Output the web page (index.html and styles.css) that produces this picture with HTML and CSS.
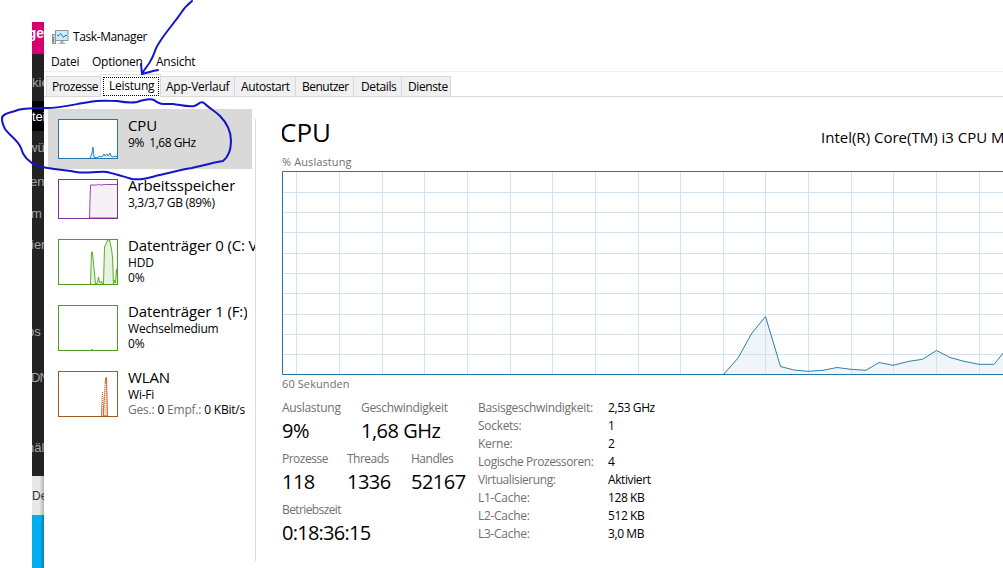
FILE: index.html
```
<!DOCTYPE html>
<html lang="de">
<head>
  <meta charset="UTF-8" />
  <meta name="viewport" content="width=device-width, initial-scale=1.0" />
  <title>Task-Manager</title>
  <link rel="stylesheet" href="styles.css">
</head>
<body>
  <!-- Page behind the window -->
  <div class="behind">
    <div class="b-pink">ge</div>
    <div class="b-kie">kie</div>
    <div class="b-black">tei</div>
    <div class="b-wu">wü</div>
    <div class="b-en">en</div>
    <div class="b-m">m</div>
    <div class="b-ier">ier</div>
    <div class="b-ps">ps</div>
    <div class="b-dn">DN</div>
    <div class="b-hal">häl</div>
    <div class="b-p">P</div>
    <div class="b-status">De</div>
    <div class="b-desktop"></div>
  </div>

  <div class="window">
    <div class="titlebar">
      <svg class="app-icon" width="17" height="16" viewBox="0 0 17 16">
        <rect x="0.5" y="4.5" width="3" height="9" fill="#c9d3ca" stroke="#87958d"/>
        <path d="M1.500 7v5" stroke="#6f9b62"/>
        <rect x="3.500" y="0.5" width="12.500" height="10" fill="#c9ecfa" stroke="#8b99a2"/>
        <path d="M5 5.500h2l1.500-2 3 4 1.500-2H15" fill="none" stroke="#277fa9"/>
        <path d="M8.500 11h3v2h2v1h-7v-1h2z" fill="#a5b0b7"/>
      </svg>
      <span>Task-Manager</span>
    </div>
    <div class="menu">
      <span class="m1">Datei</span>
      <span class="m2">Optionen</span>
      <span>Ansicht</span>
    </div>
    <div class="tabs">
      <div class="tab tab1">Prozesse</div>
      <div class="tab active"><span>Leistung</span></div>
      <div class="tab tab3">App-Verlauf</div>
      <div class="tab tab4">Autostart</div>
      <div class="tab tab5">Benutzer</div>
      <div class="tab tab6">Details</div>
      <div class="tab tab7">Dienste</div>
    </div>

    <div class="content">
      <div class="sidebar">
        <div class="item selected">
          <svg class="thumb" width="60" height="40" viewBox="0 0 60 40">
            <rect x="0.5" y="0.5" width="59" height="39" fill="#fff" stroke="#2178b4"/>
            <path d="M32 39l2-5 1-6 1 10 3 1 2-2 2 1 2-1 1-2 1 2 2-2 1 2 2-3 1 3 2 1 3-1 1 1" fill="#dcebf5" stroke="#2f86bb"/>
          </svg>
          <div class="info">
            <div class="name">CPU</div>
            <div class="sub s-cpu">9%&nbsp; 1,68 GHz</div>
          </div>
        </div>
        <div class="item">
          <svg class="thumb" width="60" height="40" viewBox="0 0 60 40">
            <path d="M31.500 39l1-33h7l1-1 2 1 5-.5h12V39z" fill="#f4f2f4" stroke="#9447ad"/>
            <rect x="0.5" y="0.5" width="59" height="39" fill="none" stroke="#7d2fa0"/>
          </svg>
          <div class="info">
            <div class="name">Arbeitsspeicher</div>
            <div class="sub s-ram">3,3/3,7 GB (89%)</div>
          </div>
        </div>
        <div class="item">
          <svg class="thumb" width="60" height="46" viewBox="0 0 60 46">
            <path d="M32.500 45l1-32h1l2 22 1 10 2-1 1-6 1 5 1 1 1-2 1 3h1l1-37 2-4 1-3h2l2 9 1 8 1 27 1-4 1 3 1-14 2 15" fill="#e6f3de" stroke="#5cab2d"/>
            <rect x="0.5" y="0.5" width="59" height="45" fill="none" stroke="#4e9e1f"/>
          </svg>
          <div class="info">
            <div class="name">Datenträger 0 (C: V</div>
            <div class="sub">HDD</div>
            <div class="sub third">0%</div>
          </div>
        </div>
        <div class="item">
          <svg class="thumb" width="60" height="46" viewBox="0 0 60 46">
            <rect x="0.5" y="0.5" width="59" height="45" fill="#fff" stroke="#4e9e1f"/>
            <path d="M33 44.500h2" stroke="#7fb95d"/>
          </svg>
          <div class="info">
            <div class="name">Datenträger 1 (F:)</div>
            <div class="sub">Wechselmedium</div>
            <div class="sub third">0%</div>
          </div>
        </div>
        <div class="item">
          <svg class="thumb" width="60" height="46" viewBox="0 0 60 46">
            <path d="M43.500 45l1-25 1 25 2-37 1-2 1 39z" fill="#f3d3bb" stroke="#c86b36"/>
            <path d="M44.500 45V20M46.500 44l1-32" stroke="#fff" stroke-dasharray="1 1"/>
            <rect x="0.5" y="0.5" width="59" height="45" fill="none" stroke="#a4571b"/>
          </svg>
          <div class="info">
            <div class="name">WLAN</div>
            <div class="sub">Wi-Fi</div>
            <div class="sub third"><i>Ges.:</i> 0 <i>Empf.:</i> 0 KBit/s</div>
          </div>
        </div>
      </div>

      <div class="main">
        <div class="head">
          <h1>CPU</h1>
          <div class="model">Intel(R) Core(TM) i3 CPU M</div>
        </div>
        <div class="caption c-top">% Auslastung</div>
        <svg class="chart" width="721" height="204" viewBox="282 171 721 204">
          <path class="area" d="M724 374L738 358 752 333 765.500 316.500 780.500 366.500 794 370 808 371.300 823 370.300 837 367.500 851 369.300 866 370.300 879 362.500 893 365.300 909 361.300 922.500 359.300 936.500 350.500 950 357.500 964 361.300 979 364.300 994 364.300 1004 352V374z"/>
          <path class="grid" d="M296.500 172v202M339.500 172v202M382.500 172v202M424.500 172v202M467.500 172v202M510.500 172v202M552.500 172v202M595.500 172v202M638.500 172v202M680.500 172v202M723.500 172v202M765.500 172v202M808.500 172v202M851.500 172v202M893.500 172v202M936.500 172v202M979.500 172v202M283 192.500h720M283 212.500h720M283 232.500h720M283 253.500h720M283 273.500h720M283 293.500h720M283 314.500h720M283 334.500h720M283 354.500h720"/>
          <path class="line" d="M724 374L738 358 752 333 765.500 316.500 780.500 366.500 794 370 808 371.300 823 370.300 837 367.500 851 369.300 866 370.300 879 362.500 893 365.300 909 361.300 922.500 359.300 936.500 350.500 950 357.500 964 361.300 979 364.300 994 364.300 1004 352"/>
          <path class="frame" d="M1003 171.500H282.500v203H1003"/>
        </svg>
        <div class="caption c-sec">60 Sekunden</div>

        <div class="stats">
          <div class="left">
            <div class="row">
              <div class="stat w79"><label>Auslastung</label><b>9%</b></div>
              <div class="stat"><label>Geschwindigkeit</label><b>1,68 GHz</b></div>
            </div>
            <div class="row">
              <div class="stat w65"><label class="tight">Prozesse</label><b>118</b></div>
              <div class="stat w64"><label class="tight">Threads</label><b>1336</b></div>
              <div class="stat"><label class="tight">Handles</label><b>52167</b></div>
            </div>
            <div class="row">
              <div class="stat uptime"><label>Betriebszeit</label><b>0:18:36:15</b></div>
            </div>
          </div>
          <div class="details">
            <span>Basisgeschwindigkeit:</span><em>2,53 GHz</em>
            <span>Sockets:</span><em>1</em>
            <span>Kerne:</span><em>2</em>
            <span class="tight">Logische Prozessoren:</span><em>4</em>
            <span class="tight">Virtualisierung:</span><em>Aktiviert</em>
            <span>L1-Cache:</span><em>128 KB</em>
            <span>L2-Cache:</span><em>512 KB</em>
            <span>L3-Cache:</span><em>3,0 MB</em>
          </div>
        </div>
      </div>
    </div>
  </div>

  <!-- Pen marks -->
  <svg class="pen" width="1003" height="568" viewBox="0 0 1003 568">
    <path d="M192 1C187 5 184 8 181 13C175 22 165 33 159 43C154 50 155 54 151 60C149 65 144 69 142 74M141 64L142 74C147 73 152 71 158 70"/>
    <path d="M2 119C1 114 9 113 15 111C24 107 35 109 46 108C63 108 75 104 89 102C100 100 108 101 117 101C128 103 132 103 137 102C143 100 149 98 154 100C159 105 165 104 173 104C181 105 187 107 194 106C199 105 200 100 204 103C209 108 215 111 220 116C226 122 231 130 231 141C231 151 228 157 223 161C211 163 201 166 192 168C182 169 174 172 164 174C153 176 143 181 132 179C122 176 115 174 107 172C96 171 86 174 76 172C64 170 49 169 38 166C28 162 23 157 21 148C18 140 9 135 5 129C3 125 2 123 2 119Z"/>
  </svg>
</body>
</html>
```

FILE: styles.css
```
* {
  box-sizing: border-box;
}
body {
  margin: 0;
  width: 1003px;
  height: 568px;
  padding: 22px 0 0 32px;
  display: flex;
  overflow: hidden;
  background: #fff;
  color: #000;
  font-family: "Open Sans", "Noto Sans", sans-serif;
  font-size: 12px;
  position: relative;
}

/* strip of the page behind */
.behind {
  width: 12px;
  flex: none;
  overflow: hidden;
  font-family: "Liberation Sans", Arial, sans-serif;
  font-size: 13px;
  line-height: 16px;
  color: #a5a5a5;
  background: #232323;
  white-space: nowrap;
}
.behind div {
  overflow: hidden;
  display: flex;
}
.b-pink {
  height: 32px;
  padding-top: 3px;
  background: #d6006e;
  color: #fff;
  font-size: 14px;
  font-weight: bold;
  justify-content: flex-end;
}
.b-kie { height: 47px; padding-top: 21px; }
.b-black {
  height: 30px;
  padding-top: 8px;
  background: #000;
  color: #fff;
}
.b-wu { height: 37px; padding-top: 9px; margin-left: -4px; }
.b-en { height: 32px; padding-top: 6px; margin-left: -2px; }
.b-m { height: 32px; padding-top: 6px; margin-left: -1px; }
.b-ier { height: 85px; padding-top: 5px; margin-left: -1px; }
.b-ps { height: 42px; padding-top: 7px; margin-left: -5px; }
.b-dn { height: 72px; padding-top: 11px; margin-left: -1px; letter-spacing: -1px; }
.b-hal { height: 30px; padding-top: 9px; margin-left: -5px; }
.b-p { height: 15px; padding-top: 12px; }
.b-status {
  height: 39px;
  padding-top: 12px;
  background: linear-gradient(90deg, #e8e8e8 60%, #b5b5b5);
  color: #333;
  font-size: 12px;
}
.b-desktop {
  height: 53px;
  background: linear-gradient(90deg, #00adef 70%, #087daa);
}

.window {
  flex: 1;
  min-width: 0;
  background: #fff;
}
.titlebar {
  height: 29px;
  display: flex;
  padding-left: 8px;
  white-space: nowrap;
  line-height: 30px;
  letter-spacing: -0.4px;
}
.app-icon {
  margin: 8px 4px 0 0;
}
.menu {
  height: 21px;
  display: flex;
  border-bottom: 1px solid #f0f0f0;
  line-height: 22px;
  padding-left: 7px;
  letter-spacing: -0.25px;
}
.m1 { width: 41px; }
.m2 { width: 64px; }
.tabs {
  height: 25px;
  display: flex;
  align-items: flex-end;
  border-bottom: 1px solid #d9d9d9;
  padding-left: 2px;
  letter-spacing: -0.25px;
}
.tab {
  height: 20px;
  border: 1px solid #d9d9d9;
  border-width: 1px 1px 0 0;
  background: #f0f0f0;
  line-height: 20px;
  white-space: nowrap;
  padding-left: 5px;
}
.tab1 {
  width: 55px;
  border-left-width: 1px;
  letter-spacing: -0.5px;
}
.tab3 { width: 74px; }
.tab4 { width: 61px; padding-left: 6px; letter-spacing: -0.4px; }
.tab5 { width: 58px; padding-left: 6px; letter-spacing: -0.5px; }
.tab6 { width: 48px; padding-left: 7px; letter-spacing: -0.4px; }
.tab7 { width: 49px; padding-left: 6px; letter-spacing: -0.4px; }
.tab.active {
  width: 60px;
  height: 23px;
  background: #fff;
  padding: 2px 1px 0 2px;
  margin-bottom: -1px;
}
.active span {
  display: block;
  height: 19px;
  line-height: 16px;
  border: 1px dotted #000;
  padding-left: 5px;
}

.content {
  display: flex;
}
.sidebar {
  width: 212px;
  height: 464px;
  flex: none;
  padding: 12px 0 0 4px;
  background: linear-gradient(#dcdcdc, #dcdcdc) no-repeat 211px 22px / 1px 442px;
  overflow: hidden;
}
.item {
  width: 207px;
  height: 66px;
  display: flex;
  padding: 10px 0 0 10px;
}
.item:nth-child(1), .item:nth-child(2) {
  height: 60px;
}
.selected {
  width: 204px;
  background: #d9d9d9;
}
.thumb {
  flex: none;
  background: #fff;
}
.info {
  margin-top: -2px;
  padding-left: 10px;
  white-space: nowrap;
  overflow: hidden;
}
.name {
  font-size: 15px;
  line-height: 17px;
  height: 18px;
  letter-spacing: -0.12px;
}
.sub {
  height: 16px;
  line-height: 16px;
  letter-spacing: -0.2px;
}
.s-cpu { letter-spacing: -0.45px; }
.s-ram { letter-spacing: -0.3px; }
.third {
  line-height: 14px;
}
.sub i {
  font-style: normal;
  color: #707070;
}

.main {
  flex: 1;
  min-width: 0;
  padding-left: 26px;
}
.head {
  height: 58px;
  display: flex;
  overflow: hidden;
}
h1 {
  width: 541px;
  flex: none;
  margin: 0 0 0 -2px;
  font-size: 26px;
  font-weight: normal;
  line-height: 71px;
}
.model {
  font-size: 15px;
  line-height: 80px;
  white-space: nowrap;
}
.caption {
  color: #707070;
  font-size: 11px;
  letter-spacing: 0.1px;
}
.c-top {
  height: 16px;
  line-height: 13px;
}
.chart {
  display: block;
}
.grid {
  fill: none;
  stroke: #d2e3ef;
}
.area {
  fill: #f0f5fa;
}
.line {
  fill: none;
  stroke: #2c80ae;
}
.frame {
  fill: none;
  stroke: #2178a8;
}
.c-sec {
  height: 24px;
  line-height: 18px;
}

.stats {
  display: flex;
}
.left {
  width: 196px;
}
.row {
  display: flex;
  height: 51px;
}
.w79 { width: 79px; }
.w65 { width: 65px; }
.w64 { width: 64px; }
.stat label {
  display: block;
  height: 18px;
  line-height: 18px;
  color: #707070;
  white-space: nowrap;
  letter-spacing: -0.3px;
}
.stat b {
  display: block;
  font-weight: normal;
  font-size: 20px;
  line-height: 28px;
  white-space: nowrap;
  letter-spacing: -0.5px;
}
.stat .tight {
  letter-spacing: -0.5px;
}
.uptime label { letter-spacing: -0.6px; }
.uptime b { letter-spacing: -0.75px; }
.details {
  display: grid;
  grid-template-columns: 130px 100px;
  grid-auto-rows: 18px;
  line-height: 18px;
  white-space: nowrap;
  letter-spacing: -0.3px;
}
.details span {
  color: #707070;
}
.details .tight {
  letter-spacing: -0.42px;
}
.details em {
  font-style: normal;
  letter-spacing: -0.4px;
}

.pen {
  position: absolute;
  left: 0;
  top: 0;
  fill: none;
  stroke: #1414c8;
  stroke-width: 2;
  stroke-linecap: round;
}
```
